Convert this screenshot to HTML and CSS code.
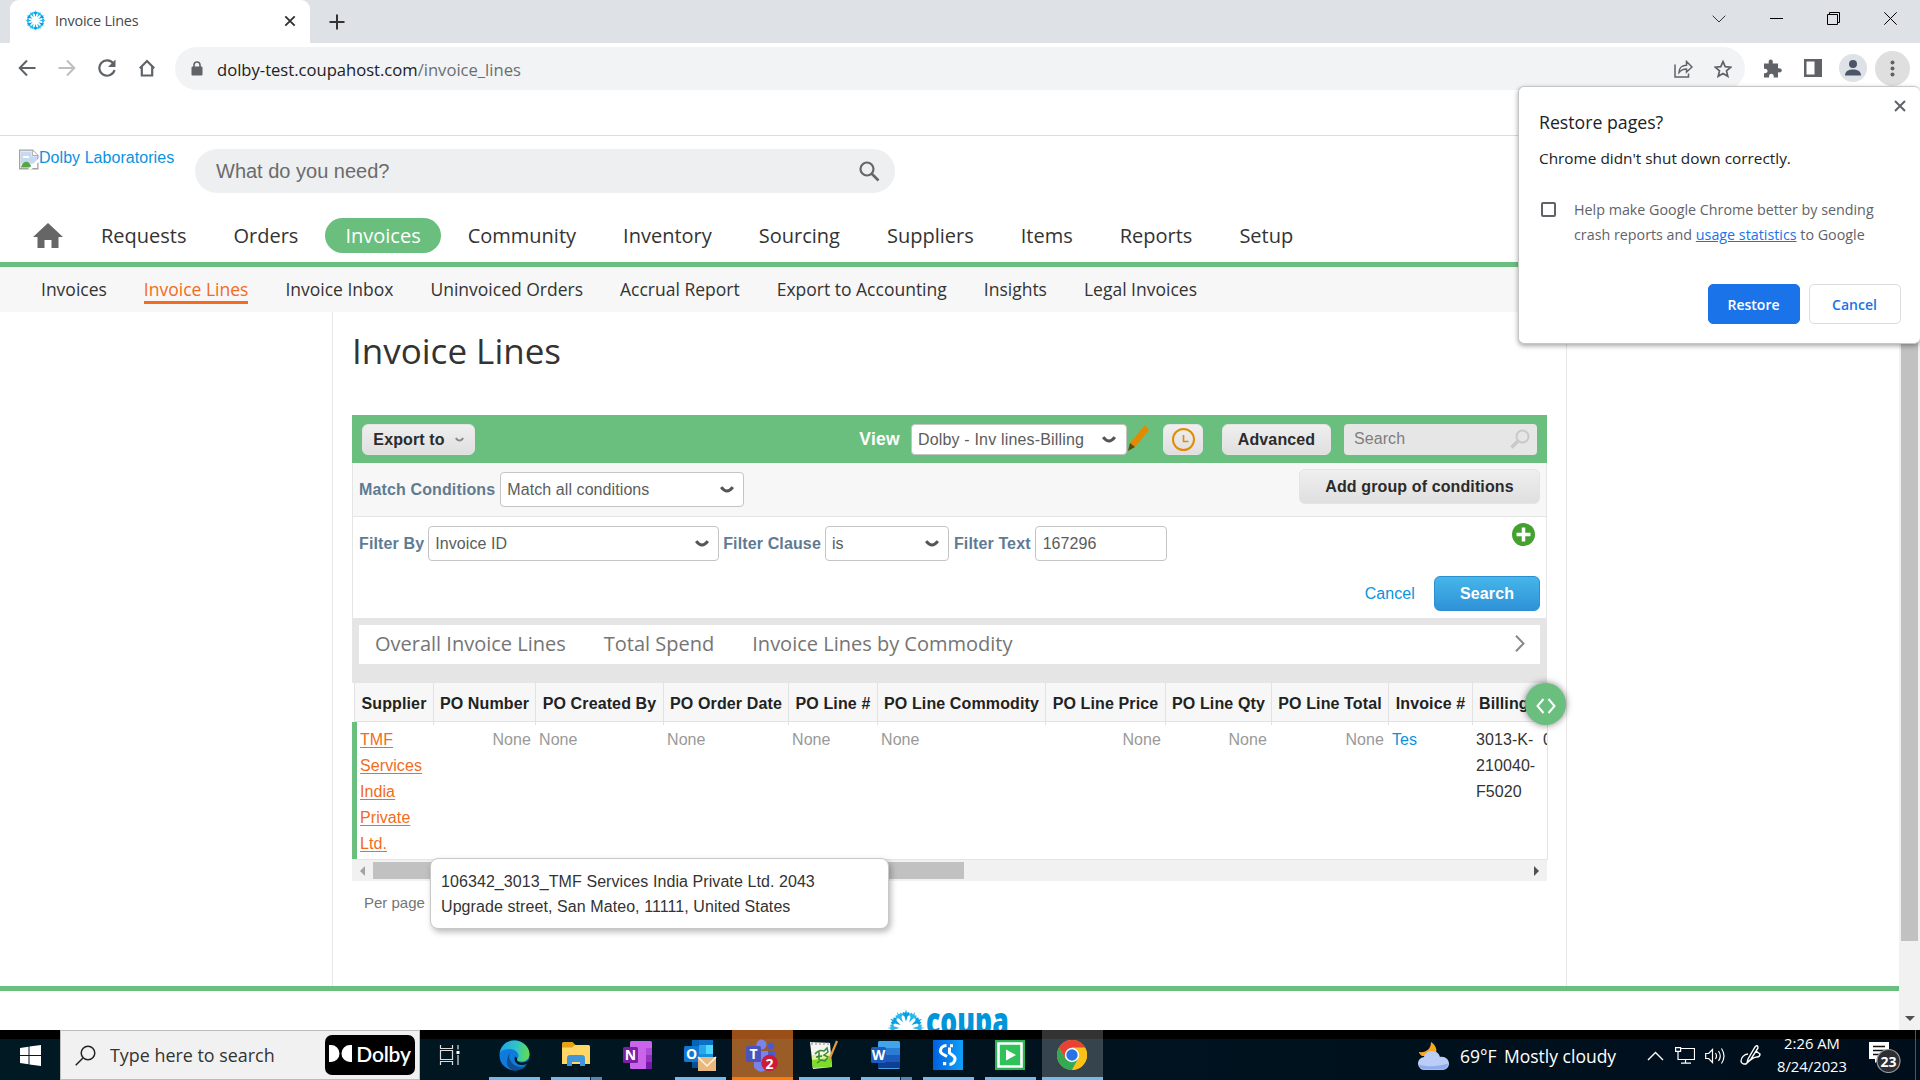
FILE: index.html
```html
<!DOCTYPE html>
<html lang="en">
<head>
<meta charset="utf-8">
<title>Invoice Lines</title>
<link rel="stylesheet" href="styles.css">
</head>
<body>
<svg width="0" height="0" class="defs">
  <defs>
    <symbol id="chev" viewBox="0 0 14 8"><path d="M1.2 1.2C3 3.6 5 5 7 5S11 3.6 12.8 1.2" fill="none" stroke="#555" stroke-width="3"/></symbol>
    <path id="ray" d="M0-3.600L.9-6.800 2.300-7.600 1.700-9.300.5-8.800 0-10.800-.5-8.800-1.700-9.300-2.300-7.600-.9-6.800z"/>
    <symbol id="burst" viewBox="-11 -11 22 22"><g fill="#0a9fe0"><use href="#ray"/><use href="#ray" transform="rotate(60)"/><use href="#ray" transform="rotate(120)"/><use href="#ray" transform="rotate(180)"/><use href="#ray" transform="rotate(240)"/><use href="#ray" transform="rotate(300)"/></g><g fill="#25b9ee"><use href="#ray" transform="rotate(30)"/><use href="#ray" transform="rotate(90)"/><use href="#ray" transform="rotate(150)"/><use href="#ray" transform="rotate(210)"/><use href="#ray" transform="rotate(270)"/><use href="#ray" transform="rotate(330)"/></g></symbol>
  </defs>
</svg>

<header class="tabstrip">
  <div class="tab">
    <svg class="favicon" width="21" height="21"><use href="#burst"/></svg>
    <span class="tab-title">Invoice Lines</span>
    <svg class="tab-close" width="12" height="12" viewBox="0 0 12 12"><path d="M1.3 1.3l9.4 9.4M10.7 1.3l-9.4 9.4" stroke="#333" stroke-width="1.9"/></svg>
  </div>
  <svg class="newtab" width="16" height="16" viewBox="0 0 16 16"><path d="M8 .5v15M.5 8h15" stroke="#333" stroke-width="2"/></svg>
  <div class="wincontrols">
    <svg width="14" height="8" viewBox="0 0 14 8"><path d="M.7.7L7 7l6.3-6.3" fill="none" stroke="#333"/></svg>
    <svg width="13" height="13" viewBox="0 0 13 13"><path d="M0 6.5h13" stroke="#000"/></svg>
    <svg width="13" height="13" viewBox="0 0 13 13"><path d="M.5 2.5h10v10H.5zM2.5 2.5v-2h10v10h-2" fill="none" stroke="#000"/></svg>
    <svg width="13" height="13" viewBox="0 0 13 13"><path d="M.3.3l12.4 12.4M12.7.3L.3 12.7" stroke="#000"/></svg>
  </div>
</header>

<div class="toolbar">
  <div class="navbtns">
    <svg width="18" height="18" viewBox="0 0 18 18"><path d="M17.5 9H2M9 1.5L1.7 9 9 16.500" fill="none" stroke="#5f6368" stroke-width="2"/></svg>
    <svg width="18" height="18" viewBox="0 0 18 18"><path d="M.5 9H16M9 1.500L16.300 9 9 16.500" fill="none" stroke="#bdbfc1" stroke-width="2"/></svg>
    <svg width="18" height="18" viewBox="0 0 18 18"><path d="M15.300 4.500A7.700 7.700 0 1 0 16.500 11" fill="none" stroke="#5f6368" stroke-width="2.200"/><path d="M17.500.5v7.500H10z" fill="#5f6368"/></svg>
    <svg width="18" height="18" viewBox="0 0 18 18"><path d="M1.800 9.200L9 2l7.200 7.200M3.800 7.800V16.500h10.400V7.800" fill="none" stroke="#5f6368" stroke-width="2.200"/></svg>
  </div>
  <div class="omnibox">
    <svg width="12" height="15" viewBox="0 0 12 15"><rect x=".5" y="5.500" width="11" height="9" rx="1.200" fill="#5f6368"/><path d="M3 6V4a3 3 0 0 1 6 0v2" fill="none" stroke="#5f6368" stroke-width="1.600"/></svg>
    <span class="url">dolby-test.coupahost.com<span class="path">/invoice_lines</span></span>
    <svg class="share" width="19" height="18" viewBox="0 0 19 18"><path d="M1 4.500v12.500h13.500v-3.500M5 12.500C5 8 8 5.300 12.500 5.300V1.500L18 7l-5.500 5V9C9 9 7 10 5 12.500z" fill="none" stroke="#5f6368" stroke-width="1.500"/></svg>
    <svg width="18" height="18" viewBox="0 0 18 18"><path d="M9 1.600l2.200 5.100 5.500.5-4.200 3.700 1.300 5.400L9 13.400l-4.800 2.900 1.300-5.400L1.300 7.200l5.500-.5z" fill="none" stroke="#5f6368" stroke-width="1.700"/></svg>
  </div>
  <div class="extras">
    <svg width="19" height="19" viewBox="0 0 19 19"><path d="M1 4.500h4.800C5.200 1.500 6.500.5 7.700.5s2.600 1 2 4H15v4.800c3-.5 3.800.9 3.800 2s-.9 2.500-3.800 2V18.500h-4.300c.3-2.800-.9-3.700-2.300-3.700s-2.700.9-2.300 3.700H1v-4.300c2.500.3 3.500-.8 3.500-2.200S3.500 9.500 1 9.800z" fill="#5f6368"/></svg>
    <svg class="side" width="18" height="18" viewBox="0 0 18 18"><path d="M0 0h18v18H0zM2.500 2.500v13h8v-13z" fill="#5f6368" fill-rule="evenodd"/></svg>
    <svg class="avatar" width="28" height="28" viewBox="0 0 28 28"><circle cx="14" cy="14" r="14" fill="#dee1e6"/><circle cx="14" cy="10" r="4" fill="#4a5568"/><path d="M6 21.500c0-4.500 4-6 8-6s8 1.500 8 6z" fill="#4a5568"/></svg>
    <svg width="35" height="35" viewBox="0 0 35 35"><circle cx="17.500" cy="17.500" r="17.500" fill="#dfdfdf"/><g fill="#5f6368"><circle cx="17.500" cy="11.500" r="2"/><circle cx="17.500" cy="17.500" r="2"/><circle cx="17.500" cy="23.500" r="2"/></g></svg>
  </div>
</div>

<div class="viewport">
  <main class="page">
    <div class="topline"></div>
    <div class="searchrow">
      <a class="logo"><svg width="20" height="21" viewBox="0 0 21 21"><path d="M.7.7h13.600l5.500 5.500v14H.7z" fill="#fff" stroke="#a0a4a8" stroke-width="1.400"/><path d="M2 2h11v5h6v8H2z" fill="#c5d9f3"/><path d="M4 9a2 2 0 0 1 3-2 2.500 2.500 0 0 1 4 2z" fill="#fff"/><path d="M2 19c1-5 5-8 8.500-5L14 19z" fill="#56a73c"/><path d="M14 .7v5.500h6" fill="#fff" stroke="#a0a4a8"/><path d="M9 21L21 9v3.500L13 21z" fill="#fff"/></svg><span>Dolby Laboratories</span></a>
      <div class="mainsearch"><span>What do you need?</span>
        <svg width="21" height="21" viewBox="0 0 21 21"><circle cx="8" cy="8" r="6.500" fill="none" stroke="#666" stroke-width="2.200"/><path d="M12.500 12.500l7 7" stroke="#666" stroke-width="2.600"/></svg></div>
    </div>
    <nav class="nav">
      <svg class="home" width="30" height="25" viewBox="0 0 30 25"><path d="M15 0L30 14h-4.500v11h-7v-8h-7v8h-7V14H0z" fill="#666"/></svg>
      <a>Requests</a><a>Orders</a><a class="on">Invoices</a><a>Community</a><a>Inventory</a><a>Sourcing</a><a>Suppliers</a><a>Items</a><a>Reports</a><a>Setup</a>
    </nav>
    <nav class="subnav">
      <a>Invoices</a><a class="on">Invoice Lines</a><a>Invoice Inbox</a><a>Uninvoiced Orders</a><a>Accrual Report</a><a>Export to Accounting</a><a>Insights</a><a>Legal Invoices</a>
    </nav>
    <section class="content">
      <h1>Invoice Lines</h1>
      <div class="panel">
        <div class="greenbar">
          <div class="btn export">Export to<svg width="9" height="6" viewBox="0 0 14 8"><path d="M1.200 1.200C3 3.600 5 5 7 5S11 3.600 12.800 1.200" fill="none" stroke="#888" stroke-width="3"/></svg></div>
          <b class="viewlabel">View</b>
          <div class="select view">Dolby - Inv lines-Billing<svg width="14" height="8"><use href="#chev"/></svg></div>
          <svg class="pencil" width="23" height="28" viewBox="0 0 23 28"><path d="M18 1l4 5-14 17-5-4z" fill="#e48a00"/><path d="M3 19l5 4-7 4z" fill="#5b4a10"/></svg>
          <div class="btn clock"><svg width="23" height="23" viewBox="0 0 23 23"><circle cx="11.500" cy="11.500" r="10.500" fill="none" stroke="#e48a00" stroke-width="2"/><path d="M11.500 7v6.500h5" fill="none" stroke="#e48a00" stroke-width="1.600"/></svg></div>
          <div class="btn advanced">Advanced</div>
          <div class="barsearch">Search<svg width="20" height="20" viewBox="0 0 20 20"><circle cx="12.500" cy="7.500" r="6" fill="none" stroke="#c9c9c9" stroke-width="2"/><path d="M8.500 11.500L1.500 18.500" stroke="#c9c9c9" stroke-width="3.500"/></svg></div>
        </div>
        <div class="matchrow">
          <b>Match Conditions</b>
          <div class="select match">Match all conditions<svg width="14" height="8"><use href="#chev"/></svg></div>
          <div class="btn addgroup">Add group of conditions</div>
        </div>
        <div class="filters">
          <div class="filterrow">
            <b>Filter By</b><div class="select f1">Invoice ID<svg width="14" height="8"><use href="#chev"/></svg></div>
            <b>Filter Clause</b><div class="select f2">is<svg width="14" height="8"><use href="#chev"/></svg></div>
            <b>Filter Text</b><div class="select f3">167296</div>
            <svg class="plus" width="23" height="23" viewBox="0 0 23 23"><circle cx="11.500" cy="11.500" r="11.500" fill="#44a12f"/><path d="M11.500 4.500v14M4.500 11.500h14" stroke="#fff" stroke-width="3.500"/></svg>
          </div>
          <div class="actions"><a>Cancel</a><div class="btn primary">Search</div></div>
        </div>
        <div class="charts"><div class="charttabs"><span>Overall Invoice Lines</span><span>Total Spend</span><span>Invoice Lines by Commodity</span>
          <svg width="10" height="17" viewBox="0 0 10 17"><path d="M1 .8l7.500 7.700L1 16.200" fill="none" stroke="#888" stroke-width="2"/></svg></div></div>
        <div class="tablebox">
          <div class="thead">
            <b>Supplier</b><b>PO Number</b><b>PO Created By</b><b>PO Order Date</b><b>PO Line #</b><b>PO Line Commodity</b><b>PO Line Price</b><b>PO Line Qty</b><b>PO Line Total</b><b>Invoice #</b><b class="left">Billing</b>
          </div>
          <div class="trow">
            <div class="supplier"><a>TMF Services India Private Ltd.</a></div>
            <div class="r">None</div><div>None</div><div>None</div><div>None</div><div>None</div><div class="r">None</div><div class="r">None</div><div class="r">None</div><div class="link">Tes</div><div class="dark">3013-K-210040-F5020</div><div class="dark">0</div>
          </div>
        </div>
        <div class="fab"><svg width="20" height="16" viewBox="0 0 20 16"><path d="M7.500 1L1.500 8l6 7M12.500 1l6 7-6 7" fill="none" stroke="#fff" stroke-width="2"/></svg></div>
        <div class="hscroll">
          <svg width="5" height="10" viewBox="0 0 5 10"><path d="M5 0v10L0 5z" fill="#a3a3a3"/></svg>
          <div class="hthumb"></div>
          <svg class="ra" width="5" height="10" viewBox="0 0 5 10"><path d="M0 0v10l5-5z" fill="#505050"/></svg>
        </div>
        <div class="tooltip">106342_3013_TMF Services India Private Ltd. 2043<br>Upgrade street, San Mateo, 11111, United States</div>
      </div>
      <div class="perpage">Per page</div>
    </section>
    <footer class="foot"><svg width="38" height="38"><use href="#burst"/></svg><span class="coupa">coupa</span></footer>
  </main>
  <div class="vscroll">
    <div class="vthumb"></div>
    <svg width="10" height="5" viewBox="0 0 10 5"><path d="M0 0h10L5 5z" fill="#505050"/></svg>
  </div>
</div>

<div class="taskbar">
  <div class="start"><svg width="21" height="21" viewBox="0 0 21 21"><path d="M0 3l8.500-1.200V10H0zM9.500 1.600L21 0v10H9.500zM0 11h8.500v8.200L0 18zM9.500 11H21v10L9.500 19.400z" fill="#fff"/></svg></div>
  <div class="tbsearch">
    <svg width="21" height="21" viewBox="0 0 21 21"><circle cx="13" cy="8" r="6.800" fill="none" stroke="#222" stroke-width="1.500"/><path d="M8 13L.7 20.300" stroke="#222" stroke-width="1.500"/></svg>
    <span>Type here to search</span>
    <div class="dolby"><svg width="23" height="17" viewBox="0 0 23 17"><path d="M0 0h2a8.500 8.500 0 0 1 0 17H0zM23 0h-2a8.500 8.500 0 0 0 0 17h2z" fill="#fff"/></svg><b>Dolby</b></div>
  </div>
  <div class="apps">
    <div class="app tv"><svg width="21" height="20" viewBox="0 0 21 20"><path d="M1.500 0v3.500h12V0M1.500 5.500h12v9h-12zM1.500 20v-3.500h12V20M19 0v4.500M19 10V20" fill="none" stroke="#ddd" stroke-width="1.200"/><path d="M17.500 6h3v3h-3z" fill="#fff"/></svg></div>
    <div class="app run"><svg width="31" height="31" viewBox="0 0 31 31"><defs><linearGradient id="eg" x1="0" y1=".3" x2="1" y2=".4"><stop offset="0" stop-color="#1fa5e8"/><stop offset=".55" stop-color="#2fc4c8"/><stop offset="1" stop-color="#63dc4e"/></linearGradient></defs><circle cx="15.500" cy="15.500" r="15" fill="#0f7bdc"/><path d="M.8 13C2 5 8 .5 15.500.5 24 .5 30.500 7 30.500 14c0 5-4 7.500-8 7.500-3 0-4.500-1-4.300-2.200.1-.8 1.300-1.500 1.300-3.300 0-4-4-7-8.500-7-5 0-8.500 1.500-10.200 4z" fill="url(#eg)"/><path d="M11 12c-3 7 3 15 11 15 3 0 5-1 6-2-3 4-7.500 5.500-12 5.500C8 30 5 22 11 12z" fill="#114f95"/><path d="M18 18c-.8 3 1.500 4.500 5 4.500 3 0 5-1 7.500-3.500-.5 3-1.500 4-2.500 5-7 2.500-14 0-12-7.500z" fill="#001823"/></svg></div>
    <div class="app run multi"><svg width="28" height="26" viewBox="0 0 28 26"><path d="M0 1.500Q0 0 1.500 0h9l3 3v3H0z" fill="#e3a21a"/><path d="M0 5.500h10l3-2.500h13.500Q28 3 28 4.500V22H0z" fill="#ffd766"/><path d="M5 24v-8q0-3 3-3h12q3 0 3 3v8h-5v-4h-8v4z" fill="#3f96dc"/></svg></div>
    <div class="app"><svg width="30" height="30" viewBox="0 0 30 30"><rect x="7" y="1" width="22" height="28" rx="1.500" fill="#ca64ea"/><path d="M23 8h6v7h-6z" fill="#ae4bd5"/><path d="M23 15h6v7h-6z" fill="#9332bf"/><path d="M23 22h6v7h-6z" fill="#7719aa"/><rect y="7" width="15" height="16" rx="1.500" fill="#7b1fa2"/><text x="7.500" y="19.500" class="ico">N</text></svg></div>
    <div class="app run"><svg class="ol" width="33" height="33" viewBox="0 0 33 33"><rect x="8" y="1" width="21" height="22" rx="1.500" fill="#1490df"/><path d="M8 1h7v7H8z" fill="#0364b8"/><path d="M15 1h14v5H15z" fill="#0f6fc4"/><path d="M15 6h7v9h-7z" fill="#28a8ea"/><path d="M22 6h7v9h-7z" fill="#50d9ff"/><path d="M8 22h14v7H8z" fill="#0a4e94"/><rect y="7" width="15" height="16" rx="1.500" fill="#0f78d4"/><text x="7.500" y="19.500" class="ico">O</text><path d="M14 18h18v14H14z" fill="#e8b87d"/><path d="M14 18l9 9 9-9" fill="none" stroke="#fff3e0" stroke-width="1.500"/></svg></div>
    <div class="app teams"><svg width="32" height="33" viewBox="0 0 32 33"><circle cx="15.500" cy="5.500" r="5" fill="#7b83eb"/><circle cx="25" cy="7" r="3.400" fill="#5059c9"/><path d="M18 12h11v11h-9z" fill="#5059c9"/><path d="M8 12h14v10a7 7 0 0 1-14 6z" fill="#7b83eb"/><rect y="7" width="15" height="16" rx="1.500" fill="#4b53bc"/><text x="7.500" y="19.500" class="ico">T</text><circle cx="23.500" cy="24" r="8.300" fill="#cc1a38"/><text x="23.500" y="29.500" class="ico">2</text></svg></div>
    <div class="app run"><svg width="30" height="30" viewBox="0 0 30 30"><path d="M1 2l20 1 2 24-19 2z" fill="#f4f4f0"/><path d="M3 19l19-2 .8 10L3.500 28z" fill="#7ddb2a"/><path d="M3 15l19-1v4L3 20z" fill="#dff19a"/><path d="M6 14q4-5 9-3l3-3 1 4-4 3 4 2-3 4-4-1-4 3M7 17l6-1M10 12v8" fill="none" stroke="#3a8a35" stroke-width="1.500"/><path d="M3 2v3M7 2v3M11 2v3M15 2v3M19 2v3" stroke="#888"/><path d="M28 1L20 20" stroke="#e39a3b" stroke-width="2.200"/></svg></div>
    <div class="app run multi"><svg width="30" height="30" viewBox="0 0 30 30"><rect x="7" y="1" width="22" height="28" rx="1.500" fill="#41a5ee"/><path d="M7 8h22v7H7z" fill="#2b7cd3"/><path d="M7 15h22v7H7z" fill="#185abd"/><path d="M7 22h22v6H7z" fill="#103f91"/><rect y="7" width="15" height="16" rx="1.500" fill="#1b5dbe"/><text x="7.500" y="19.500" class="ico">W</text></svg></div>
    <div class="app run"><svg width="30" height="30" viewBox="0 0 30 30"><defs><linearGradient id="sg" x2="1"><stop stop-color="#0060e0"/><stop offset="1" stop-color="#10a0f8"/></linearGradient></defs><path d="M0 0h30v30H0z" fill="url(#sg)"/><path d="M13.500 5.500C7 6 6 12 9.500 14L14 16.500M16.500 7.500V13l3.500 2.500C24 18 21.500 24 16.500 24.500" fill="none" stroke="#fff" stroke-width="3"/><path d="M17 4.200h3v3h-3zM10 22h3.200v3.200H10z" fill="#fff"/></svg></div>
    <div class="app run"><svg width="30" height="30" viewBox="0 0 30 30"><path d="M0 0h30v30H0z" fill="#29b455"/><path d="M3.500 3.500h23v23h-23z" fill="#2fc25b" stroke="#fff" stroke-width="2.600"/><path d="M11 9.500v11l10-5.500z" fill="#fff"/></svg></div>
    <div class="app chrome"><svg width="30" height="30" viewBox="-15 -15 30 30"><circle r="15" fill="#fbc116"/><path d="M-13-7.500L-6.200 4 0 7 0 15A15 15 0 0 1-13-7.500z" fill="#34a853"/><path d="M0 15L6.500 3 0 0-6.500 3.500 0 7z" fill="#34a853"/><path d="M13-7.500A15 15 0 0 1 0 15L6.500 3.500 5-7.500z" fill="#fbc116"/><path d="M-13-7.500A15 15 0 0 1 13-7.500H0L-6.500 3.500z" fill="#e94235"/><circle r="7.200" fill="#fff"/><circle r="5.700" fill="#2b72e5"/></svg></div>
  </div>
  <div class="tray">
    <svg class="weather" width="31" height="30" viewBox="0 0 31 30"><path d="M13 1c6 4 7 10 3 14H4c-3-2-3-4-3-4 7 1 12-3 12-10z" fill="#f6a81f"/><path d="M7 29a6.500 6.500 0 0 1-1-13c1-4 4-6 8-6 4.500 0 7 2.500 8 6 5-1 9 2.500 9 6.500S28 29 24 29z" fill="#b9cdf6"/><path d="M6 28.500c-3-1-5-3-5-5 8 3 20 2 29-1-.5 4-3 6-7 6z" fill="#8eadee"/></svg>
    <span class="temp">69°F</span><span class="cond">Mostly cloudy</span>
    <svg class="up" width="17" height="10" viewBox="0 0 17 10"><path d="M1 9l7.500-7.500L16 9" fill="none" stroke="#fff" stroke-width="1.400"/></svg>
    <svg class="mon" width="20" height="17" viewBox="0 0 20 17"><path d="M5 1.500h14.500v11H3V7M10.500 12.500V16M6 16.200h10M.6.6h5v3.800h-5zM3 4.500V8" fill="none" stroke="#fff" stroke-width="1.200"/></svg>
    <svg class="vol" width="21" height="18" viewBox="0 0 21 18"><path d="M.7 6.500h3L7.500 2.500v13L3.700 11.500h-3zM10.500 6q2 3 0 6M13.500 4q3.500 5 0 10M16.500 1.500q5 7.500 0 15" fill="none" stroke="#fff" stroke-width="1.200"/></svg>
    <svg class="pen" width="21" height="21" viewBox="0 0 21 21"><path d="M8 14l7-12q3-3 3 1l-7 11-4 4zM8 9c-4 0-7 4-7 7s4 4 6 2c3-3 7-6 10-6 2 0 3-1 3-3l-4-3" fill="none" stroke="#fff" stroke-width="1.400"/></svg>
    <div class="clocktext"><span>2:26 AM</span><span>8/24/2023</span></div>
    <div class="notif"><svg width="33" height="31" viewBox="0 0 33 31"><path d="M0 0h20v17h-9L6 21v-4H0z" fill="#fff"/><path d="M4 4.500h12M4 8.500h12M4 12.500h12" stroke="#111" stroke-width="1.300"/><circle cx="19.500" cy="19" r="11.500" fill="#2b2e33" stroke="#9a9a9a" stroke-width="1.200"/><text x="19.500" y="24.500" class="ico">23</text></svg></div>
    <i class="peek"></i>
  </div>
</div>

<div class="popup">
  <svg class="pclose" width="12" height="12" viewBox="0 0 12 12"><path d="M1 1l10 10M11 1L1 11" stroke="#5f6368" stroke-width="2"/></svg>
  <div class="ptitle">Restore pages?</div>
  <div class="psub">Chrome didn't shut down correctly.</div>
  <div class="pcheck"><i></i><div><span>Help make Google Chrome better by sending</span><br><span>crash reports and <a>usage statistics</a> to Google</span></div></div>
  <div class="pbtns"><div class="pb fill">Restore</div><div class="pb">Cancel</div></div>
</div>
</body>
</html>
```
FILE: styles.css
```css
* { box-sizing: border-box; }
body { margin: 0; width: 1920px; height: 1080px; overflow: hidden; display: flex; flex-direction: column; position: relative; background: #fff; font: 16px "Liberation Sans", Arial, sans-serif; color: #333; white-space: nowrap; }
svg { display: block; flex: none; }
.defs { position: absolute; }

/* browser chrome */
.tabstrip { height: 43px; background: #dee1e6; display: flex; align-items: center; padding-left: 10px; font-family: "Open Sans", sans-serif; flex: none; }
.tab { width: 300px; height: 43px; background: #fff; border-radius: 9px 9px 0 0; display: flex; align-items: center; padding: 0 14px 2px 15px; }
.tab-title { font-size: 14.400px; margin-left: 9px; letter-spacing: -.2px; color: #45494d; }
.tab-close { margin-left: auto; }
.newtab { margin-left: 19px; }
.wincontrols { margin-left: auto; display: flex; align-items: center; gap: 44px; padding: 0 23px 6px 0; }
.toolbar { height: 51px; display: flex; align-items: center; padding: 0 10px 1px 18px; flex: none; font-family: "Open Sans", sans-serif; }
.navbtns { display: flex; gap: 22px; width: 157px; }
.omnibox { width: 1570px; height: 43px; margin-top: 1px; border-radius: 22px; background: #f1f3f4; display: flex; align-items: center; padding: 0 13px 0 16px; }
.url { margin: 2px 0 0 14px; font-size: 16.600px; color: #202124; }
.path { color: #6b6f73; }
.share { margin-left: auto; margin-right: 21px; }
.extras { display: flex; align-items: center; padding-left: 18px; }
.side { margin: 0 17px 0 22px; }
.avatar { margin-right: 8px; }

/* page */
.viewport { flex: 1; display: flex; min-height: 0; }
.page { width: 1899px; overflow: hidden; }
.vscroll { width: 21px; background: #f1f1f1; padding-top: 21px; display: flex; flex-direction: column; align-items: center; justify-content: space-between; padding-bottom: 9px; }
.vthumb { width: 17px; height: 826px; background: #c1c1c1; }
.topline { height: 42px; border-bottom: 1px solid #dcdcdc; }
.searchrow { display: flex; padding: 13px 0 0 19px; }
.logo { display: flex; width: 176px; color: #0a93de; line-height: 17px; letter-spacing: .05px; }
.mainsearch { width: 700px; height: 44px; border-radius: 22px; background: #eeeff1; display: flex; align-items: center; justify-content: space-between; padding: 0 15px 0 21px; font-size: 20px; color: #6b6b6b; }
.nav { height: 74px; border-bottom: 5px solid #6abf7e; padding: 25px 0 0 33px; display: flex; font-family: "Open Sans", sans-serif; font-size: 20px; color: #333; }
.home { margin: 5px 18px 0 0; }
.nav a { height: 35px; line-height: 35px; padding: 0 20px; margin-right: 7px; border-radius: 18px; }
.nav a.on { background: #6abf7e; color: #fff; }
.subnav { height: 45px; background: #f7f7f7; display: flex; gap: 37px; padding: 9px 0 0 41px; font-family: "Open Sans", sans-serif; font-size: 17.500px; line-height: 26px; }
.subnav a { height: 28px; }
.subnav a.on { color: #f26b21; border-bottom: 3px solid #f26b21; }
.content { width: 1235px; height: 674px; margin-left: 332px; border: solid #e8e8e8; border-width: 0 1px; padding: 0 0 0 19px; }
h1 { margin: 0; height: 103px; padding-top: 15px; font: 400 35px/48px "Open Sans", sans-serif; color: #333; }
.panel { width: 1196px; position: relative; letter-spacing: .08px; }
.btn { background: linear-gradient(#efefef, #dfdfdf); border: 1px solid #e4e4e4; border-radius: 6px; font-weight: 700; letter-spacing: .12px; color: #2b2b2b; display: flex; align-items: center; justify-content: center; }
.greenbar { width: 1195px; height: 48px; background: #6abf7e; display: flex; align-items: center; padding: 0 10px 0 10px; }
.greenbar > * { flex: none; }
.greenbar .btn { height: 31px; padding-top: 1px; }
.export { width: 113px; gap: 10px; }
.viewlabel { margin-left: auto; margin-right: 11px; color: #fff; font-size: 17.500px; letter-spacing: .3px; padding-top: 1px; }
.select { height: 35px; background: #fff; border: 1px solid #c4c4c4; border-radius: 4px; display: flex; align-items: center; justify-content: space-between; padding: 0 9px 0 6px; color: #5c5c5c; }
.view { width: 216px; height: 31px; padding: 2px 10px 0 6px; letter-spacing: .17px; }
.pencil { margin: -2px 13px 0 0; }
.clock { width: 40px; margin-right: 19px; }
.advanced { width: 109px; margin-right: 13px; }
.barsearch { width: 193px; height: 31px; border-radius: 4px; background: #e6e6e6; display: flex; align-items: center; justify-content: space-between; padding: 0 7px 0 10px; color: #7d7d7d; }
.matchrow { width: 1195px; height: 54px; background: #f7f7f7; border: solid #e5e5e5; border-width: 0 1px 1px; display: flex; padding: 6px 6px 0; }
.matchrow b, .filterrow b { color: #5f7b94; line-height: 35px; letter-spacing: .13px; }
.matchrow b { margin-top: 3px; margin-right: 5px; }
.match { width: 244px; margin-top: 3px; }
.addgroup { width: 241px; height: 35px; margin-left: auto; }
.filters { width: 1195px; height: 101px; border: solid #e5e5e5; border-width: 0 1px; padding: 9px 6px 0; }
.filterrow { display: flex; }
.filterrow b { margin-right: 4px; }
.f1 { width: 291px; margin-right: 4px; }
.f2 { width: 124px; margin-right: 5px; }
.f3 { width: 132px; padding-left: 7px; }
.plus { margin: -3px 5px 0 auto; }
.actions { display: flex; justify-content: flex-end; gap: 19px; padding-top: 15px; line-height: 35px; color: #0a93de; }
.primary { width: 106px; height: 35px; background: linear-gradient(#45b6ea, #2f92d8); border-color: #2b8fd0; color: #fff; }
.charts { width: 1195px; height: 65px; background: #e5e5e5; padding: 7px 7px 0; }
.charttabs { height: 39px; background: #fff; display: flex; align-items: center; gap: 38px; padding: 0 15px 2px 16px; font: 20px "Open Sans", sans-serif; letter-spacing: 0; color: #757575; }
.charttabs svg { margin-left: auto; }
.tablebox { height: 177px; overflow: hidden; border-right: 1px solid #e5e5e5; border-bottom: 1px solid #e5e5e5; }
.thead, .trow { display: grid; grid-template-columns: 81px 102px 128px 125px 89px 168px 120px 106px 117px 84px 67px 60px; }
.thead { height: 39px; line-height: 42px; margin-left: 2px; grid-template-columns: 79px 102px 128px 125px 89px 168px 120px 106px 117px 84px 1fr; background: #f7f7f7; border-left: 1px solid #e2e2e2; border-bottom: 1px solid #e2e2e2; text-align: center; color: #222; letter-spacing: .12px; }
.thead b { border-right: 1px solid #e2e2e2; }
.thead .left { text-align: left; padding-left: 6px; }
.trow { height: 137px; line-height: 26px; color: #999; }
.trow > div { padding: 5px 4px 0; }
.trow .r { text-align: right; }
.trow .supplier { border-left: 5px solid #6abf7e; padding-left: 3px; white-space: normal; color: #f26b21; text-decoration: underline; text-underline-offset: 2px; }
.trow .link { color: #0a93de; }
.trow .dark { color: #333; white-space: normal; padding-right: 0; }
.hscroll { width: 1195px; height: 21px; background: #f1f1f1; display: flex; align-items: center; padding: 0 8px; }
.hthumb { width: 591px; height: 17px; margin-left: 8px; background: #c1c1c1; }
.ra { margin-left: auto; }
.fab { position: absolute; left: 1173px; top: 268px; width: 41px; height: 42px; border-radius: 50%; background: #6abf7e; box-shadow: 0 0 7px rgba(0,0,0,.5); display: flex; align-items: center; justify-content: center; padding-top: 4px; }
.tooltip { position: absolute; left: 78px; top: 443px; width: 459px; height: 71px; padding: 10px; background: #fff; border: 1px solid #c8c8c8; border-radius: 8px; box-shadow: 2px 3px 6px rgba(0,0,0,.28); line-height: 25px; }
.perpage { padding: 13px 0 0 12px; font-size: 15px; color: #757575; }
.foot { border-top: 5px solid #6abf7e; height: 60px; display: flex; padding: 18px 0 0 887px; color: #0095db; }
.coupa { font: 800 38px/38px "Open Sans", sans-serif; margin: -8px 0 0 1px; transform: scaleX(.7); transform-origin: 0 0; }

/* taskbar */
.taskbar { height: 50px; flex: none; display: flex; background: linear-gradient(#000 9px, transparent 9px), linear-gradient(90deg, #001a24, #000e1c); color: #fff; font-family: "Open Sans", sans-serif; }
.start { width: 60px; display: flex; align-items: center; padding-left: 20px; }
.tbsearch { width: 360px; border: 1px solid #bcbcbc; background: #f1f1f1; color: #333; display: flex; align-items: center; padding: 0 4px 0 14px; font-size: 17.900px; }
.tbsearch span { margin-left: 14px; }
.dolby { width: 90px; height: 40px; margin-left: auto; border-radius: 7px; background: #000; color: #fff; display: flex; align-items: center; justify-content: center; gap: 4px; font: 21px/1 Lato, sans-serif; padding-bottom: 3px; }
.dolby b { font-weight: 600; letter-spacing: -.2px; }
.apps { display: flex; }
.app { width: 51px; margin-right: 11px; display: flex; align-items: center; justify-content: center; border-bottom: 3px solid transparent; padding: 4px 1px 1px 0; }
.tv { width: 58px; padding-right: 0; }
.run { border-bottom-color: #76b9ed; }
.multi { position: relative; }
.multi::after { content: ""; position: absolute; right: 0; bottom: -3px; width: 11px; height: 3px; background: #5488b3; border-left: 1px solid #123; }
.teams { width: 61px; margin: 0 6px 0 -5px; background: linear-gradient(#9a4f18 9px, #9a5d28 9px); border-bottom-color: #ff7a00; }
.chrome { width: 61px; margin: 0 0 0 -5px; background: linear-gradient(#333 9px, #35444d 9px); border-bottom-color: #76b9ed; }
.ico { font: 700 14px "Open Sans", sans-serif; fill: #fff; text-anchor: middle; }
.tray { margin-left: auto; display: flex; align-items: center; width: 502px; font-size: 17.500px; padding-top: 1px; }
.temp { margin-left: 11px; width: 44px; }
.cond { width: 143px; }
.mon { margin-left: 11px; }
.vol { margin-left: 10px; }
.pen { margin-left: 14px; }
.clocktext { width: 90px; margin: -1px 0 0 6px; display: flex; flex-direction: column; align-items: center; font-size: 14.800px; line-height: 23px; }
.notif { margin: 3px 0 0 12px; width: 33px; }
.peek { width: 1px; height: 50px; margin: -1px 0 0 13px; background: #555; }

/* restore bubble */
.popup { position: absolute; left: 1518px; top: 86px; width: 402px; height: 258px; background: #fff; border: 1px solid #c6c6c6; border-right: 0; border-radius: 6px; box-shadow: 0 2px 5px rgba(0,0,0,.35); padding: 0 19px 0 20px; font-family: "Open Sans", sans-serif; color: #202124; }
.pclose { position: absolute; right: 14px; top: 13px; }
.ptitle { font-size: 17.700px; line-height: 24px; margin-top: 23px; }
.psub { font-size: 15.350px; line-height: 22px; margin-top: 13px; }
.pcheck { display: flex; margin-top: 28px; padding-left: 2px; color: #5f6368; font-size: 14.300px; line-height: 25px; }
.pcheck i { width: 15px; height: 15px; border: 2px solid #5f6368; border-radius: 2px; margin: 5px 18px 0 0; }
.pcheck a { color: #1a73e8; text-decoration: underline; }
.pbtns { display: flex; justify-content: flex-end; gap: 9px; margin-top: 37px; }
.pb { width: 92px; height: 40px; border: 1px solid #dadce0; border-radius: 5px; color: #1a73e8; font-size: 14px; font-weight: 600; display: flex; align-items: center; justify-content: center; padding-right: 1px; }
.fill { background: #1a73e8; color: #fff; border-color: #1a73e8; }
```
